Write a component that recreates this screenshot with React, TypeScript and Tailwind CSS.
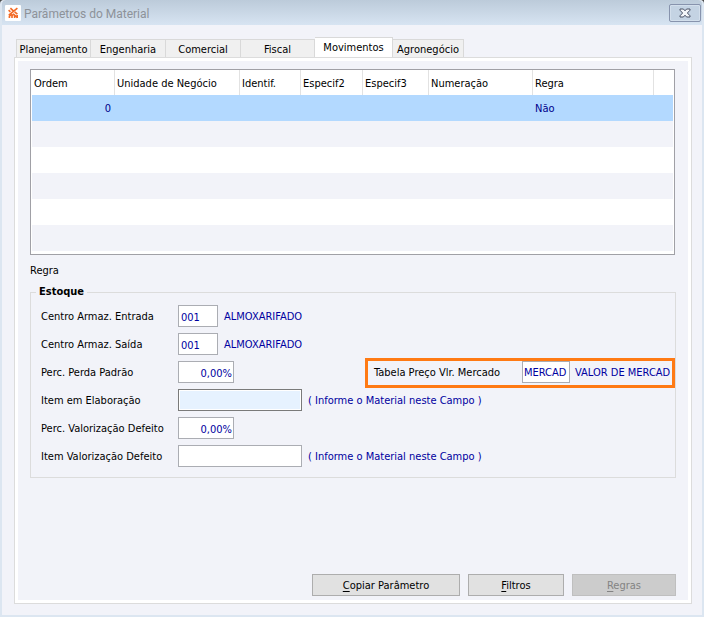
import { useState } from 'react'
import clsx from 'clsx'

const TABS = [
	{ label: 'Planejamento', width: 'w-[75px]' },
	{ label: 'Engenharia', width: 'w-[75px]' },
	{ label: 'Comercial', width: 'w-[75px]' },
	{ label: 'Fiscal', width: 'w-[74px]' },
	{ label: 'Movimentos', width: 'w-[78px]' },
	{ label: 'Agronegócio', width: 'w-[71px]' },
]

const COLUMNS = [
	{ label: 'Ordem', width: 'w-[83px]' },
	{ label: 'Unidade de Negócio', width: 'w-[125px]' },
	{ label: 'Identif.', width: 'w-[61px]' },
	{ label: 'Especif2', width: 'w-[62px]' },
	{ label: 'Especif3', width: 'w-[66px]' },
	{ label: 'Numeração', width: 'w-[104px]' },
	{ label: 'Regra', width: 'w-[121px]' },
]

const EMPTY_ROWS = 5

function AppIcon() {
	return (
		<svg width="16" height="16" viewBox="0 0 16 16" aria-hidden="true">
			<rect width="16" height="16" rx="1" fill="#fff" />
			<g stroke="#f26a26" strokeWidth="1.6" fill="none">
				<path d="M3.6 5.2l1.8 1.6M5.4 3.2l3.2 3M12.4 3.2L3.8 10.2M9.6 6.8l2.8 2.4" />
				<path d="M4.4 13v-1.8l2.4-2M7 13v-2.4l1.6-1.4 3.8 3.4M9.6 13v-2.4M12.2 13v-3" />
			</g>
		</svg>
	)
}

function CloseIcon() {
	return (
		<svg width="12" height="10" viewBox="0 0 12 10" aria-hidden="true">
			<path
				d="M1 1h3.4L6 2.8 7.6 1H11v1.2L8.4 5 11 7.8V9H7.6L6 7.2 4.4 9H1V7.8L3.6 5 1 2.2z"
				fill="#f4f6f9"
				stroke="#4b5266"
				strokeLinejoin="round"
			/>
		</svg>
	)
}

function Field({
	id,
	label,
	value = '',
	width,
	hint,
	right,
	focused,
	children,
}: {
	id: string
	label: string
	value?: string
	width: string
	hint?: string
	right?: boolean
	focused?: boolean
	children?: React.ReactNode
}) {
	const [text, setText] = useState(value)
	return (
		<div className="flex h-7 items-center">
			<label htmlFor={id} className="w-[137px] shrink-0 pt-px">
				{label}
			</label>
			<input
				id={id}
				type="text"
				value={text}
				onChange={(e) => setText(e.target.value)}
				className={clsx(
					'h-[22px] shrink-0 border pt-[2px] pl-[2px] text-[#0000a0] outline-none',
					width,
					right ? 'pr-px text-right' : 'pr-[2px]',
					focused
						? 'border-[#7a7a7a] bg-[#e6f2ff] shadow-[inset_0_0_0_1px_#fff]'
						: 'border-[#abadb3] bg-white',
				)}
			/>
			{hint && (
				<span className="ml-[6px] pt-px whitespace-nowrap text-[#0000a0]">
					{hint}
				</span>
			)}
			{children}
		</div>
	)
}

function MarketTable() {
	const [code, setCode] = useState('MERCAD')
	return (
		<div className="ml-auto flex h-[30px] w-[310px] shrink-0 items-start self-start border-3 border-[#ff7a14] pl-[6px] leading-6">
			<label htmlFor="tabela" className="w-[148px] shrink-0">
				Tabela Preço Vlr. Mercado
			</label>
			<input
				id="tabela"
				type="text"
				value={code}
				onChange={(e) => setCode(e.target.value)}
				className="h-[22px] w-12 shrink-0 border border-[#abadb3] bg-white px-px pt-[2px] text-[#0000a0] outline-none"
			/>
			<span className="ml-[5px] whitespace-nowrap text-[#0000a0]">
				VALOR DE MERCAD
			</span>
		</div>
	)
}

function ActionButton({
	hotkey,
	rest,
	width,
	disabled,
}: {
	hotkey: string
	rest: string
	width: string
	disabled?: boolean
}) {
	return (
		<button
			type="button"
			disabled={disabled}
			className={clsx(
				'h-[22px] border pt-px',
				width,
				disabled
					? 'border-[#bfbfbf] bg-[#cccccc] text-[#838383]'
					: 'border-[#adadad] bg-[#e1e1e1]',
			)}
		>
			<span className="underline underline-offset-2">{hotkey}</span>
			{rest}
		</button>
	)
}

export default function App() {
	const [active, setActive] = useState('Movimentos')

	return (
		<div className="flex min-h-screen bg-[#4a4a4a] font-['DejaVu_Sans_Condensed','DejaVu_Sans',sans-serif] text-[11px] leading-[14px] text-black">
			<div className="flex min-w-0 flex-1 flex-col rounded-t-[4px] border-x-2 border-b-2 border-[#dce6f1] bg-[#f2f3f9]">
				<header className="flex h-[25px] items-center rounded-t-[4px] bg-linear-to-b from-[#bccbda] to-[#d7e4f2] pr-px pl-[3px]">
					<AppIcon />
					<h1 className="ml-[3px] flex-1 pt-[2px] font-[Roboto,'Noto_Sans',sans-serif] text-[12px] text-[#8d9299]">
						Parâmetros do Material
					</h1>
					<button
						type="button"
						aria-label="Fechar"
						className="flex h-[18px] w-8 items-center justify-center rounded-[2px] border border-[#8793ad] bg-[#c4d3e3] shadow-[inset_0_0_0_1px_#d3dfec]"
					>
						<CloseIcon />
					</button>
				</header>

				<div className="flex flex-1 flex-col pt-3 pr-[10px] pb-[11px] pl-3">
					<div role="tablist" className="flex items-end pl-[2px]">
						{TABS.map((tab, i) => (
							<button
								key={tab.label}
								type="button"
								role="tab"
								aria-selected={tab.label === active}
								onClick={() => setActive(tab.label)}
								className={clsx(
									'shrink-0 border-t border-r border-[#d9d9d9] text-center whitespace-nowrap',
									tab.width,
									i === 0 && 'border-l',
									tab.label === active
										? 'h-5 bg-white pt-px shadow-[0_2px_0_#fff]'
										: 'h-[18px] bg-[#f0f0f0] pt-[2px]',
								)}
							>
								{tab.label}
							</button>
						))}
					</div>

					<main className="flex flex-1 flex-col border border-[#dcdcdc] px-[15px] pt-[11px] pb-[7px] shadow-[inset_0_0_0_3px_#fff]">
						<div className="mr-px border border-[#a0a0a6] bg-white px-px pb-[3px]">
							<table className="w-full table-fixed border-separate border-spacing-0">
								<thead>
									<tr className="h-[25px]">
										{COLUMNS.map((col) => (
											<th
												key={col.label}
												className={clsx(
													'border-r border-[#e2e2e2] p-0 pt-[2px] pl-[2px] text-left font-normal whitespace-nowrap',
													col.width,
												)}
											>
												{col.label}
											</th>
										))}
										<th />
									</tr>
								</thead>
								<tbody className="text-[#00008b]">
									<tr className="h-[26px] bg-[#b3d9ff]">
										<td className="p-0 pt-px pr-1 text-right">0</td>
										<td colSpan={5} />
										<td className="p-0 pt-px pl-[2px]">Não</td>
										<td />
									</tr>
									{Array.from({ length: EMPTY_ROWS }, (_, i) => (
										<tr key={i} className="h-[26px] odd:bg-white even:bg-[#f2f3f9]">
											<td colSpan={8} />
										</tr>
									))}
								</tbody>
							</table>
						</div>

						<p className="mt-[9px]">Regra</p>

						<fieldset className="mt-[7px] border border-[#dcdcdc] pt-[3px] pb-[7px] pl-[10px]">
							<legend className="-ml-[5px] px-[3px] font-bold">Estoque</legend>
							<Field
								id="entrada"
								label="Centro Armaz. Entrada"
								value="001"
								width="w-10"
								hint="ALMOXARIFADO"
							/>
							<Field
								id="saida"
								label="Centro Armaz. Saída"
								value="001"
								width="w-10"
								hint="ALMOXARIFADO"
							/>
							<Field
								id="perda"
								label="Perc. Perda Padrão"
								value="0,00%"
								width="w-14"
								right
							>
								<MarketTable />
							</Field>
							<Field
								id="elaboracao"
								label="Item em Elaboração"
								width="w-[124px]"
								hint="( Informe o Material neste Campo )"
								focused
							/>
							<Field
								id="valorizacao"
								label="Perc. Valorização Defeito"
								value="0,00%"
								width="w-14"
								right
							/>
							<Field
								id="item-valorizacao"
								label="Item Valorização Defeito"
								width="w-[124px]"
								hint="( Informe o Material neste Campo )"
							/>
						</fieldset>

						<div className="mt-auto flex justify-end gap-2">
							<ActionButton hotkey="C" rest="opiar Parâmetro" width="w-[148px]" />
							<ActionButton hotkey="F" rest="iltros" width="w-24" />
							<ActionButton hotkey="R" rest="egras" width="w-[104px]" disabled />
						</div>
					</main>
				</div>
			</div>
		</div>
	)
}
